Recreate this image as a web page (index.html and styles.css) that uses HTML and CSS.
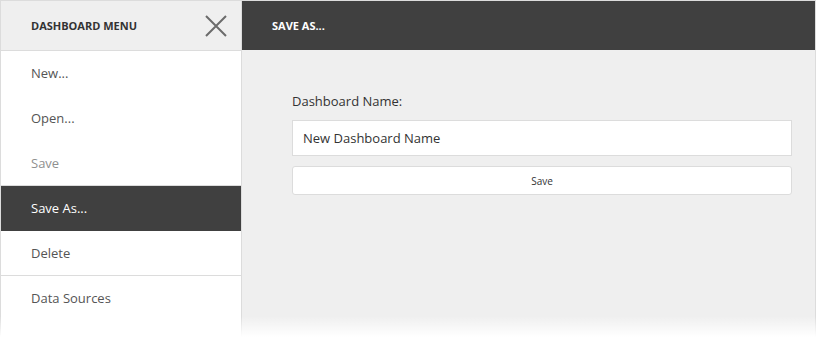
FILE: index.html
```html
<!DOCTYPE html>
<html lang="en">
<head>
    <meta charset="UTF-8">
    <meta name="viewport" content="width=device-width, initial-scale=1.0">
    <title>Dashboard Menu</title>
    <link rel="stylesheet" href="styles.css">
</head>
<body>
    <div class="frame">
        <div class="menu">
            <div class="menu-header">
                <span class="menu-title">DASHBOARD MENU</span>
                <svg class="close" width="22" height="22" viewBox="0 0 22 22">
                    <path d="M1 1 L21 21 M21 1 L1 21" stroke="#6b6b6b" stroke-width="2" fill="none"/>
                </svg>
            </div>
            <ul class="menu-list">
                <li class="menu-item">New...</li>
                <li class="menu-item">Open...</li>
                <li class="menu-item disabled">Save</li>
                <li class="menu-item selected">Save As...</li>
                <li class="menu-item">Delete</li>
                <li class="menu-item">Data Sources</li>
            </ul>
        </div>
        <div class="panel">
            <div class="panel-header">SAVE AS...</div>
            <div class="panel-body">
                <form class="save-form">
                    <label for="name">Dashboard Name:</label>
                    <input type="text" id="name" value="New Dashboard Name">
                    <button type="button">Save</button>
                </form>
            </div>
        </div>
        <div class="fade"></div>
    </div>
</body>
</html>
```

FILE: styles.css
```css
body, html {
    margin: 0;
    height: 100%;
    background: #fff;
    font-family: "Open Sans", "Noto Sans", sans-serif;
    overflow: hidden;
}
.frame {
    position: relative;
    display: flex;
    height: 346px;
    border: 1px solid #dcdcdc;
    border-bottom: none;
    box-sizing: border-box;
}
.menu {
    width: 241px;
    flex-shrink: 0;
    border-right: 1px solid #dcdcdc;
    box-sizing: border-box;
    background: #fff;
}
.menu-header {
    height: 49px;
    display: flex;
    align-items: center;
    justify-content: space-between;
    padding: 0 14px 0 30px;
    background: #efefef;
    border-bottom: 1px solid #dcdcdc;
}
.menu-title {
    font-size: 11px;
    font-weight: bold;
    color: #333;
}
.close {
    margin-top: 1px;
}
.menu-list {
    list-style: none;
    margin: 0;
    padding: 0;
}
.menu-item {
    height: 45px;
    line-height: 45px;
    padding-left: 30px;
    font-size: 13px;
    color: #555;
    box-sizing: border-box;
}
.menu-item.disabled {
    color: #8f8f8f;
    border-bottom: 1px solid #dcdcdc;
}
.menu-item.selected {
    background: #404040;
    color: #fff;
}
.menu-item:nth-child(5) {
    border-bottom: 1px solid #dcdcdc;
}
.panel {
    flex: 1;
    display: flex;
    flex-direction: column;
    background: #efefef;
}
.panel-header {
    height: 49px;
    line-height: 50px;
    padding-left: 30px;
    background: #404040;
    color: #fff;
    font-size: 11px;
    font-weight: bold;
}
.panel-body {
    padding: 42px 23px 0 50px;
}
.save-form {
    display: flex;
    flex-direction: column;
}
label {
    font-size: 13px;
    color: #333;
    margin-bottom: 10px;
}
input[type="text"] {
    height: 36px;
    padding: 0 10px;
    border: 1px solid #dcdcdc;
    background: #fff;
    font-family: inherit;
    font-size: 13px;
    color: #333;
    box-sizing: border-box;
    outline: none;
}
button {
    margin-top: 10px;
    height: 29px;
    border: 1px solid #dcdcdc;
    border-radius: 3px;
    background: #fff;
    font-family: inherit;
    font-size: 10px;
    color: #333;
}
.fade {
    position: absolute;
    left: -1px;
    right: -1px;
    bottom: 0;
    height: 30px;
    background: linear-gradient(rgba(255, 255, 255, 0), #fff 70%);
}
```
